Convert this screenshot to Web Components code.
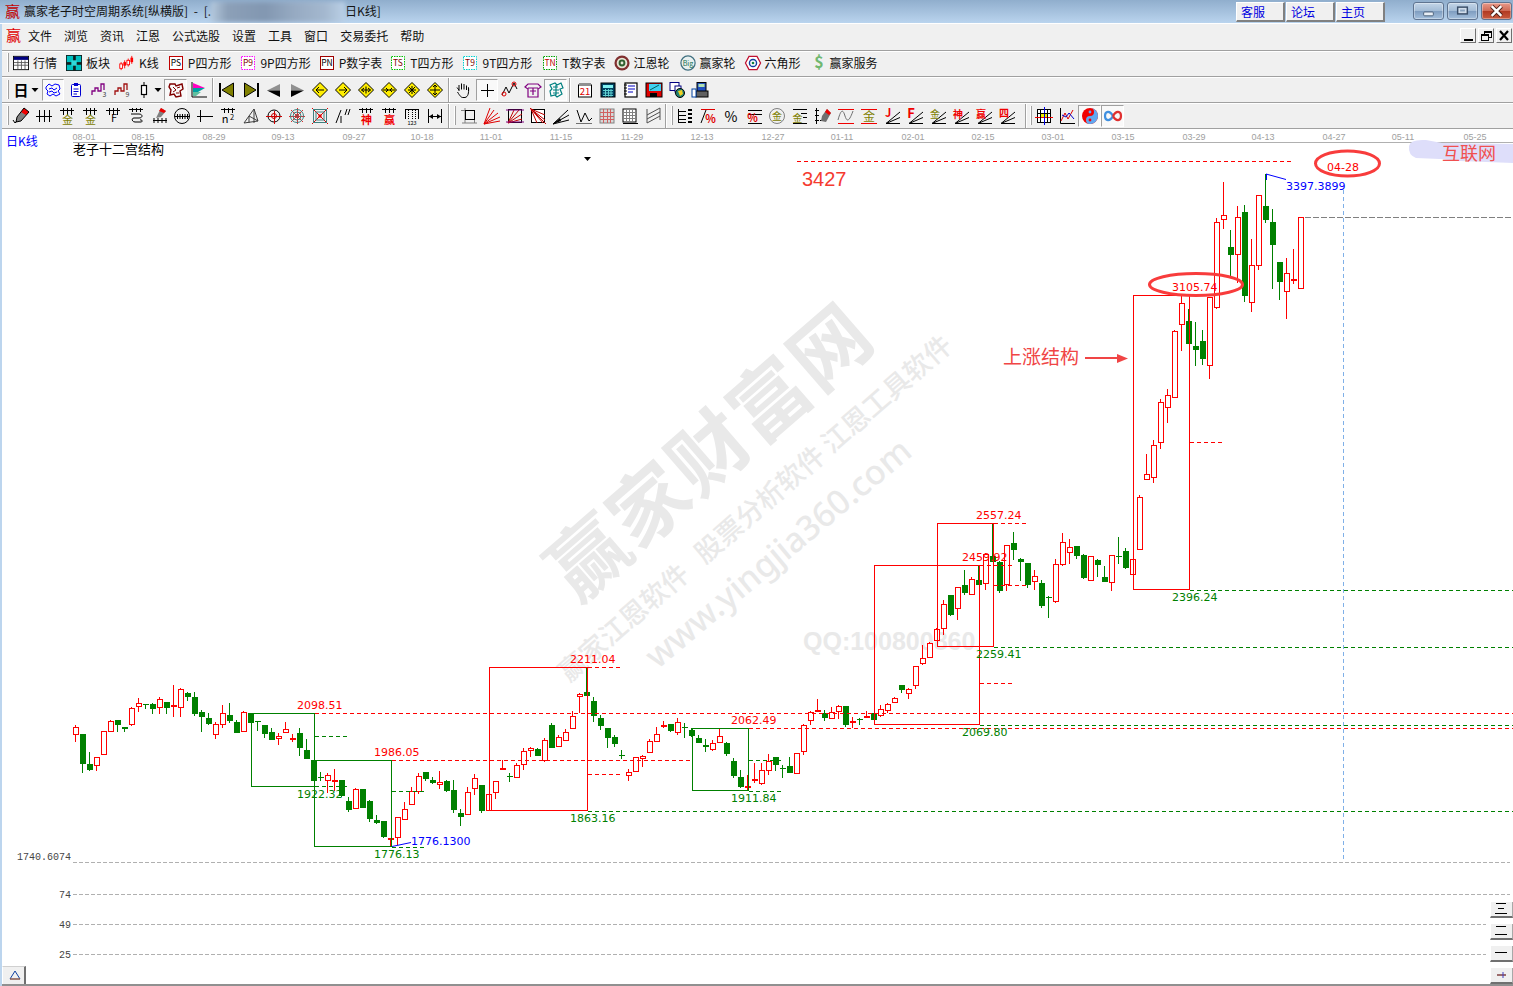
<!DOCTYPE html>
<html>
<head>
<meta charset="utf-8">
<title>赢家老子时空周期系统</title>
<style>
  html, body { margin: 0; padding: 0; background: #fff; overflow: hidden; }
</style>
</head>
<body>

<app-window>
  <title-bar slot="title"></title-bar>

  <menu-bar slot="rows"></menu-bar>

  <tool-bar slot="rows" style="height:23px;padding-bottom:2px">
    <tool-grip></tool-grip>
    <tool-item icon="grid" style="margin-left:4px">行情</tool-item>
    <tool-item icon="blocks" style="margin-left:9px">板块</tool-item>
    <tool-item icon="kline" size="18" style="margin-left:7px">K线</tool-item>
    <tool-item icon="ps" size="14" gap="5" style="margin-left:10px">P四方形</tool-item>
    <tool-item icon="p9" size="14" gap="5" style="margin-left:10px">9P四方形</tool-item>
    <tool-item icon="pn" size="14" gap="5" style="margin-left:9px">P数字表</tool-item>
    <tool-item icon="ts" size="14" gap="5" style="margin-left:9px">T四方形</tool-item>
    <tool-item icon="t9" size="14" gap="5" style="margin-left:10px">9T四方形</tool-item>
    <tool-item icon="tn" size="14" gap="5" style="margin-left:11px">T数字表</tool-item>
    <tool-item icon="wheel" style="margin-left:8px">江恩轮</tool-item>
    <tool-item icon="big" style="margin-left:10px">赢家轮</tool-item>
    <tool-item icon="hex" style="margin-left:9px">六角形</tool-item>
    <tool-item icon="dollar" size="12" gap="5" style="margin-left:12px">赢家服务</tool-item>
  </tool-bar>

  <tool-bar slot="rows">
    <tool-grip style="margin-right:1px"></tool-grip>
    <tool-btn icon="day" w="21"></tool-btn>
    <tool-btn icon="drop" w="7" style="margin-right:4px"></tool-btn>
    <tool-btn icon="map" w="22" sel></tool-btn>
    <tool-btn icon="clip"></tool-btn>
    <tool-btn icon="step3"></tool-btn>
    <tool-btn icon="step9"></tool-btn>
    <tool-btn icon="candle" w="21"></tool-btn>
    <tool-btn icon="drop" w="7" style="margin-right:3px"></tool-btn>
    <tool-btn icon="mapr" sel></tool-btn>
    <tool-btn icon="flag"></tool-btn>
    <tool-sep lead="2" tail="2"></tool-sep>
    <tool-btn icon="first"></tool-btn>
    <tool-btn icon="last"></tool-btn>
    <tool-btn icon="prev"></tool-btn>
    <tool-btn icon="next"></tool-btn>
    <tool-btn icon="d1"></tool-btn>
    <tool-btn icon="d2"></tool-btn>
    <tool-btn icon="d3"></tool-btn>
    <tool-btn icon="d4"></tool-btn>
    <tool-btn icon="d5"></tool-btn>
    <tool-btn icon="d6"></tool-btn>
    <tool-sep lead="2" tail="1"></tool-sep>
    <tool-btn icon="hand"></tool-btn>
    <tool-btn icon="cross" w="22" sel style="margin-left:2px"></tool-btn>
    <tool-btn icon="zig"></tool-btn>
    <tool-btn icon="shirt"></tool-btn>
    <tool-btn icon="mapt" sel></tool-btn>
    <tool-sep lead="2" tail="2"></tool-sep>
    <tool-btn icon="cal"></tool-btn>
    <tool-btn icon="calc"></tool-btn>
    <tool-btn icon="note"></tool-btn>
    <tool-btn icon="floppy"></tool-btn>
    <tool-btn icon="web"></tool-btn>
    <tool-btn icon="print"></tool-btn>
  </tool-bar>

  <tool-bar slot="rows">
    <tool-grip></tool-grip>
    <tool-btn icon="pen"></tool-btn>
    <tool-btn icon="tick3"></tool-btn>
    <tool-btn icon="gold"></tool-btn>
    <tool-btn icon="gold"></tool-btn>
    <tool-btn icon="combf"></tool-btn>
    <tool-btn icon="spiral"></tool-btn>
    <tool-btn icon="penruler"></tool-btn>
    <tool-btn icon="circruler"></tool-btn>
    <tool-btn icon="tick4"></tool-btn>
    <tool-btn icon="combn"></tool-btn>
    <tool-btn icon="tri"></tool-btn>
    <tool-btn icon="target"></tool-btn>
    <tool-btn icon="webr"></tool-btn>
    <tool-btn icon="square"></tool-btn>
    <tool-btn icon="slant"></tool-btn>
    <tool-btn icon="combs"></tool-btn>
    <tool-btn icon="comby"></tool-btn>
    <tool-btn icon="ruler"></tool-btn>
    <tool-btn icon="span"></tool-btn>
    <tool-sep lead="2" gap="4" tail="1" grip></tool-sep>
    <tool-btn icon="legs"></tool-btn>
    <tool-btn icon="fanr"></tool-btn>
    <tool-btn icon="boxfan"></tool-btn>
    <tool-btn icon="boxdiag"></tool-btn>
    <tool-btn icon="fanb"></tool-btn>
    <tool-btn icon="vee"></tool-btn>
    <tool-btn icon="gridr"></tool-btn>
    <tool-btn icon="gridk"></tool-btn>
    <tool-btn icon="par"></tool-btn>
    <tool-sep lead="1" gap="4" tail="0" grip></tool-sep>
    <tool-btn icon="bars"></tool-btn>
    <tool-btn icon="pctr"></tool-btn>
    <tool-btn icon="pct"></tool-btn>
    <tool-btn icon="pctl"></tool-btn>
    <tool-btn icon="goldc"></tool-btn>
    <tool-btn icon="goldl"></tool-btn>
    <tool-btn icon="rulerp"></tool-btn>
    <tool-btn icon="wave"></tool-btn>
    <tool-btn icon="goldr"></tool-btn>
    <tool-btn icon="fj"></tool-btn>
    <tool-btn icon="ff"></tool-btn>
    <tool-btn icon="fg"></tool-btn>
    <tool-btn icon="fs"></tool-btn>
    <tool-btn icon="fy"></tool-btn>
    <tool-btn icon="f4"></tool-btn>
    <tool-sep lead="7" gap="3" tail="0" grip></tool-sep>
    <tool-btn icon="gridc"></tool-btn>
    <tool-btn icon="axes"></tool-btn>
    <tool-btn icon="yin" w="23" sel></tool-btn>
    <tool-btn icon="inf" w="23" sel></tool-btn>
  </tool-bar>

  <k-chart slot="rows"></k-chart>
</app-window>

<script>
const LIGHT = '#a0a0a0';

// small helpers for the icon strings
const L = (d, c = '#000', w = 1) => `<path d="${d}" fill="none" stroke="${c}" stroke-width="${w}"/>`;
const F = (d, c) => `<path d="${d}" fill="${c}"/>`;
const T = (t, x, y, c, s = 9, b = 400) => `<text x="${x}" y="${y}" font-size="${s}" font-weight="${b}" fill="${c}" text-anchor="middle" font-family="'Noto Sans CJK SC','DejaVu Sans',sans-serif">${t}</text>`;

// the lettered tags are drawn in a 14 box
const tagged = (t, border, ink, dash) =>
  `<rect x="0.5" y="0.5" width="13" height="13" fill="#fff" stroke="${border}"${dash ? ' stroke-dasharray="1.5 1"' : ''}/>` + T(t, 7, 10.3, ink, 8.5);

const comb = g => L('M2 3.5H16M5.5 1V8M9.5 1V8M13.5 1V8') + g;
const fan = g => L('M3 16.5L17 5M3 16.5L17 10.5M3 16.5H17') + g;
const diamond = a => `<path d="M9 1.5L16.5 9L9 16.5L1.5 9Z" fill="#ffee00" stroke="#000"/>` + L(a);
const tick = n => { let s = 'M1 9.5H17'; for (let i = 0; i < n; i++) s += `M${4 + i * (n == 3 ? 5 : 3.5)}.5 3V15`; return L(s); };

const ICONS = {
  grid: `<rect x="0.5" y="1.5" width="17" height="15" fill="#fff" stroke="#000"/><rect x="1" y="2" width="16" height="3.5" fill="#000080"/>` + L('M1 8.5H17M1 11.5H17M5.5 6V16M9.5 6V16M13.5 6V16', '#555'),
  blocks: `<rect x="0" y="0" width="18" height="18" fill="#102020"/><rect x="1" y="1" width="7" height="7" fill="#00c0c0"/><rect x="11" y="1" width="6" height="7" fill="#00c0c0"/><rect x="1" y="11" width="7" height="6" fill="#00c0c0"/><rect x="11" y="11" width="6" height="6" fill="#00c0c0"/><rect x="6" y="6" width="6" height="6" fill="#30d8d8"/>`,
  kline: L('M3.5 8V17M7.5 6V15M11.5 4V13M15.5 1V10', '#f00') + `<rect x="2" y="10" width="3" height="5" fill="#fff" stroke="#f00"/><rect x="6" y="8" width="3" height="4" fill="#f00"/><rect x="10" y="6" width="3" height="5" fill="#fff" stroke="#f00"/><rect x="14" y="3" width="3" height="5" fill="#f00"/>`,
  ps: tagged('PS', '#c00000', '#000'),
  p9: tagged('P9', '#ff00ff', '#800000', true),
  pn: tagged('PN', '#a00000', '#000'),
  ts: tagged('TS', '#00c000', '#800000', true),
  t9: tagged('T9', '#00d0d0', '#800000', true),
  tn: tagged('TN', '#00a000', '#c00000', true),
  wheel: `<circle cx="9" cy="9" r="8.5" fill="#803030"/><circle cx="9" cy="9" r="6" fill="#e8e8d8"/><circle cx="9" cy="9" r="3.8" fill="#306030"/><circle cx="9" cy="9" r="1.6" fill="#e8e8d8"/>`,
  big: `<circle cx="9" cy="9" r="8" fill="#e8f0f0" stroke="#407080" stroke-width="1.4"/>` + T('Big', 9, 12, '#207050', 8),
  hex: `<path d="M4.5 1.5H13.5L17.5 9L13.5 16.5H4.5L0.5 9Z" fill="#fff" stroke="#c01030" stroke-width="1.4"/><circle cx="9" cy="9" r="4" fill="#fff" stroke="#1040a0" stroke-width="1.6"/><circle cx="9" cy="9" r="1.5" fill="#108040"/>`,
  dollar: T('$', 9, 17, '#70b870', 24, 700),

  day: T('日', 9, 15, '#000', 15, 700),
  drop: F('M5.5 7H12.5L9 11Z', '#000'),
  map: L('M2 6L5 3L8 5L11 3L15 4L16 8L14 10L16 13L12 15L9 13L6 15L3 13L4 10L2 8Z', '#0000ff') + L('M5 8L8 7L10 9L13 7M5 11L8 10L10 12L13 11', '#0000ff'),
  clip: `<rect x="4.5" y="3.5" width="9" height="12" rx="1" fill="#fff" stroke="#0000d0"/><rect x="7" y="2" width="4" height="3" fill="#0000d0"/>` + L('M6.5 8H11.5M6.5 10.5H11.5M6.5 13H10', '#0000d0'),
  step3: L('M2 14V10H5V7H8V10H11V3H14V9', '#800080', 1.3) + T('3', 14.5, 16, '#404040', 7),
  step9: L('M2 14V10H5V7H8V10H11V3H14V9', '#a01010', 1.3) + T('9', 14.5, 16, '#404040', 7),
  candle: `<rect x="6.5" y="4.5" width="5" height="9" fill="#fff" stroke="#000" stroke-width="1.2"/>` + L('M9 1V4.5M9 13.5V17'),
  mapr: L('M3 3H8L9 5L15 3L16 8L13 10L14 15L9 16L7 13L3 14L4 9L2 6Z', '#800000', 1.4) + L('M6 6L9 9L6 11M10 7L13 6M9 12L12 12', '#800000'),
  flag: L('M2 1V16H17', '#000') + F('M3 2L15 7H3Z', '#ff00c0') + F('M3 7H15L8 11H3Z', '#00a0a0') + F('M3 11H11L6 15H3Z', '#60c0a0'),
  first: F('M0 2H2V16H0Z', '#000') + `<path d="M14.5 2V16L3 9Z" fill="#808000" stroke="#000"/>`,
  last: F('M15 2H17V16H15Z', '#000') + `<path d="M2.5 2V16L14 9Z" fill="#808000" stroke="#000"/>`,
  prev: F('M15 3V9.5H2Z', '#909090') + F('M15 9.5V16L2 9.5Z', '#000'),
  next: F('M3 3V9.5H16Z', '#909090') + F('M3 9.5V16L16 9.5Z', '#000'),
  d1: diamond('M13 9H5M8 6L5 9L8 12'),
  d2: diamond('M5 9H13M10 6L13 9L10 12'),
  d3: diamond('M4.5 9H13.5M7 7L4.5 9L7 11M11 7L13.5 9L11 11M9 5.5V12.5'),
  d4: diamond('M3 9H15M6 7L8 9L6 11M12 7L10 9L12 11'),
  d5: diamond('M5 9H13M9 5V13M6 6L12 12M12 6L6 12'),
  d6: diamond('M4 9H14M9 4V14M7 6L9 4L11 6M7 12L9 14L11 12'),
  hand: L('M5 9L3 6.5M5 10V4M7.5 8.5V2.5M10 8.5V3M12.5 9V4.5M14.5 10V6.5C15 12 14 16 11 16.5H9C7 16.5 6 15 3.5 11'),
  cross: L('M9.5 3V16M3 9.5H16'),
  zig: L('M1 14L5 6L8 12L13 2L16 8') + `<circle cx="3" cy="13" r="2" fill="none" stroke="#e00000"/><circle cx="13" cy="3" r="2" fill="none" stroke="#e00000"/>`,
  shirt: L('M4 3H14L17 6L14 8V16H4V8L1 6ZM4 7H14M9 7V14M6 10H12', '#800080', 1.2),
  mapt: L('M3 4L8 2L10 4L14 2L16 7L13 8L15 13L10 16L8 14L4 15L3 10L5 8ZM6 6L11 6M6 9H12M6 12H12M9 4V14', '#008080', 1.2),
  cal: `<rect x="2.5" y="4" width="13" height="12" fill="#fff" stroke="#000"/><rect x="3" y="2" width="12" height="3" fill="#909090"/>` + T('21', 9, 14, '#e00000', 9.5),
  calc: `<rect x="2" y="2" width="14" height="14" fill="#004060" stroke="#000"/><rect x="4" y="4" width="10" height="3" fill="#80f0f0"/>` + L('M4 9.5H14M4 12H14M4 14.5H14M6.5 8V15.5M9.5 8V15.5M12 8V15.5', '#60d0d0'),
  note: `<rect x="3" y="2" width="12" height="14" fill="#fff" stroke="#000" stroke-width="1.2"/>` + L('M2 4H5M2 7H5M2 10H5M2 13H5', '#000') + L('M6 5H13M6 8H13M6 11H11', '#0000c0'),
  floppy: `<rect x="1" y="2" width="16" height="14" fill="#e00000" stroke="#000"/><rect x="4" y="3" width="12" height="7" fill="#40d0f0"/><rect x="5" y="12" width="7" height="4" fill="#000"/>` + L('M5 9L14 4', '#006060'),
  web: `<rect x="2" y="1.5" width="9" height="8" fill="#fff" stroke="#000080"/><rect x="7" y="5" width="6" height="6" fill="#fff" stroke="#000080"/><circle cx="12" cy="12" r="4.5" fill="#208070" stroke="#000"/>` + F('M10 10L14 9L15 13L12 15Z', '#f0d020'),
  print: `<rect x="6" y="1.5" width="9" height="9" fill="#2050c0" stroke="#000"/><rect x="7.5" y="3" width="6" height="3" fill="#b0e0b0"/><rect x="5" y="10" width="12" height="6" fill="#606060" stroke="#000"/><rect x="1" y="8" width="4" height="8" fill="#fff" stroke="#0040a0"/>`,

  pen: F('M12 1L17 5L9 14L4 15L5 10Z', '#808080') + F('M12 1L17 5L14 8L9 5Z', '#f00000') + L('M12 1L17 5L9 14L4 15L5 10ZM1 13L3 16L5 14'),
  tick3: tick(3),
  gold: comb(T('金', 9.5, 17, '#808000', 11)),
  combf: comb(T('F', 10, 15, '#000', 11)),
  spiral: L('M2 2.5H16M5.5 1V5M9.5 1V5M13.5 1V5M4 7H12C16 7 16 11 12 11H7C4 11 5 15 8 15H14C16 15 15 12 13 13'),
  penruler: F('M11 1L16 4L11 10L6 11Z', '#808080') + F('M11 1L16 4L14 6L9 4Z', '#f00000') + L('M3 13.5H17M4 11V16M8 11V16M12 11V16M16 11V16'),
  circruler: `<circle cx="9" cy="9" r="7.5" fill="none" stroke="#000"/>` + L('M2 9.5H17M4.5 7V12M7 7V12M9.5 7V12M12 7V12M14.5 7V12'),
  tick4: tick(4),
  combn: L('M2 2.5H16M5.5 1V6M9.5 1V6M13.5 1V6') + T('n', 6, 16, '#000', 11) + T('2', 13, 13, '#000', 7.5),
  tri: L('M2 16L12 2L16 14ZM7 9L16 14M7 9V16M12 2V16', '#404040'),
  target: `<circle cx="9" cy="9" r="6" fill="none" stroke="#000"/><circle cx="9" cy="9" r="2.5" fill="none" stroke="#c00000"/>` + L('M1 9.5H17M9.5 4V17', '#d00000'),
  webr: L('M9.5 1V17M1 9.5H17M3 3L15 15M15 3L3 15', '#e03030') + `<circle cx="9" cy="9" r="6.5" fill="none" stroke="#408080"/><circle cx="9" cy="9" r="4" fill="none" stroke="#408080"/><circle cx="9" cy="9" r="2" fill="#a04040"/>`,
  square: L('M1 1L17 17M17 1L1 17', '#e00000') + `<rect x="2.5" y="2.5" width="13" height="13" fill="none" stroke="#408080"/><rect x="5" y="5" width="8" height="8" fill="none" stroke="#408080"/><rect x="7.5" y="7.5" width="3" height="3" fill="#e00000"/>`,
  slant: L('M2 16L7 3M7 16V9M11 8L13 2M14 8L16 2'),
  combs: L('M2 2.5H16M5.5 1V6M9.5 1V6M13.5 1V6') + T('神', 9.5, 17, '#f00000', 11, 700),
  comby: L('M2 2.5H16M5.5 1V6M9.5 1V6M13.5 1V6') + T('赢', 9.5, 17, '#f00000', 11, 700),
  ruler: L('M2 2.5H16M2.5 2V12M15.5 2V12') + L('M5.5 3V12M9.5 3V12M12.5 3V12', '#000', 1).replace('/>', ' stroke-dasharray="1 1"/>') + T('123', 9, 17.5, '#000', 5.5),
  span: L('M2.5 2V16M15.5 2V16M3 9.5H15') + F('M3 9.5L7 7V12Z', '#000') + F('M15 9.5L11 7V12Z', '#000'),
  legs: L('M1 3.5H13M5 1V16M2 16H17M14.5 3V16', '#808080') + `<rect x="5.5" y="3.5" width="9" height="9" fill="none" stroke="#000"/>`,
  fanr: L('M1 17L7 1M1 17L11 3M1 17L15 6M1 17L17 10M1 17L17 14', '#e00000'),
  boxfan: `<rect x="2.5" y="2.5" width="13" height="13" fill="none" stroke="#000"/>` + L('M2 16L8 3M2 16L13 3M2 16L16 7M2 16L16 12', '#c00000') + L('M0 3H18M0 15H18', '#800080'),
  boxdiag: `<rect x="2.5" y="2.5" width="13" height="13" fill="#fff" stroke="#000"/>` + L('M1 1L17 17M2 2L8 16M2 2L14 16M2 2L16 8M2 2L16 13', '#c00000'),
  fanb: L('M1 17L16 3M1 17L17 8M1 17L17 13') + F('M1 17L8 11L9 14Z', '#000'),
  vee: L('M2 3L6 15L10 6L14 14L17 11') + L('M1 16.5H17', '#707070'),
  gridr: `<rect x="2" y="2" width="14" height="14" fill="#d8d8d8" stroke="#808080"/>` + L('M5.5 2V16M9.5 2V16M12.5 2V16M2 5.5H16M2 9.5H16M2 12.5H16', '#d06060'),
  gridk: `<rect x="2" y="2" width="13" height="13" fill="#fff" stroke="#000"/>` + L('M5.5 2V15M8.5 2V15M11.5 2V15M2 5.5H15M2 8.5H15M2 11.5H15', '#808080') + L('M2 16.5H17', '#000'),
  par: L('M3 2V16M3 8L16 1M3 12L16 5M3 16L16 9M16 1V13', '#505050'),
  bars: L('M2.5 2V16M2 4.5H10M2 8.5H10M2 12.5H10M2 15.5H10') + L('M12 3H16M12 7H16M12 11H16M12 15H16', '#000', 2),
  pctr: L('M2 2.5H16', '#e00000') + L('M2 16L7 3') + T('%', 11.5, 16, '#e00000', 11, 700),
  pct: T('%', 9, 14.5, '#000', 14),
  pctl: L('M3 3.5H17M3 7.5H17M3 16.5H17', '#000') + T('%', 7.5, 15, '#e00000', 11, 700),
  goldc: `<circle cx="9" cy="9" r="7.5" fill="#f0f0f0" stroke="#808080"/>` + T('金', 9, 13, '#808000', 10),
  goldl: L('M2 2.5H16M10 6.5H16M12 10.5H16M2 16.5H16') + T('金', 6.5, 15, '#808000', 10),
  rulerp: L('M2.5 1V17M1 3.5H5M1 8.5H5M1 13.5H5M6 13.5H10') + F('M13 2L17 6L12 15L7 14L8 9Z', '#707070') + F('M13 2L17 6L15 8L11 5Z', '#f00000'),
  wave: L('M1 2.5H17M1 16.5H17', '#f00000') + L('M1 13C4 2 6 2 8 9C10 15 12 15 16 4', '#707070'),
  goldr: L('M1 2.5H17M1 16.5H17', '#f00000') + T('金', 9, 14, '#808000', 12),
  fj: fan(T('J', 5, 10, '#f00000', 11, 700)),
  ff: fan(T('F', 5, 11, '#f00000', 13, 700)),
  fg: fan(T('金', 6, 11, '#808000', 10)),
  fs: fan(T('神', 6, 11, '#f00000', 10, 700)),
  fy: fan(T('赢', 6, 11, '#f00000', 10, 700)),
  f4: fan(T('四', 6, 10, '#f00000', 10, 700)),
  gridc: `<rect x="2.5" y="2.5" width="13" height="13" fill="#fff" stroke="#000"/><rect x="6" y="6" width="6" height="5" fill="#f0f000"/>` + L('M0 10.5H18', '#f00000') + L('M9.5 0V18', '#0000e0') + L('M2 6.5H16M5.5 2V16M12.5 2V16'),
  axes: L('M2.5 1V16.5H17') + L('M3 14L7 6L10 12L15 3', '#e00000') + L('M4 8L8 10L11 6L16 12', '#0000d0'),
  yin: `<circle cx="9" cy="9" r="8" fill="#f00000"/><path d="M9 1A8 8 0 0 1 9 17A4 4 0 0 1 9 9A4 4 0 0 0 9 1Z" fill="#60a8f0"/><circle cx="9" cy="5" r="1.4" fill="#60a8f0"/><circle cx="9" cy="13" r="1.4" fill="#f00000"/>`,
  inf: L('M9 9C6 3 1 4 1 9C1 14 6 15 9 9', '#4090e0', 2.2) + L('M9 9C12 3 17 4 17 9C17 14 12 15 9 9', '#e03030', 2.2),
};

// simple element that only needs a style and a slot
const simple = (name, css, html = '<slot></slot>') => customElements.define(name, class extends HTMLElement {
  constructor() {
    super();
    this.attachShadow({mode: 'open'}).innerHTML = `<style>${css}</style>${html}`;
  }
});

simple('app-window', `
  :host { display: flex; flex-direction: column; width: 1513px; height: 986px; overflow: hidden;
    font-family: "Noto Sans CJK SC", sans-serif; font-size: 12px; color: #000; }
  .rows { display: flex; flex-direction: column; flex: 1; border-left: 2px solid #bcd5ee; min-height: 0; }
`, `<slot name="title"></slot><div class="rows"><slot name="rows"></slot></div>`);

simple('tool-bar', `
  :host { display: flex; align-items: center; height: 25px; padding-left: 5px; background: #f0f0f0;
    border-top: 1px solid ${LIGHT}; box-shadow: inset 0 1px #fff; white-space: nowrap; }
`);

simple('tool-grip', `
  :host { display: block; width: 1px; height: 19px; border-left: 1px solid #fff; background: ${LIGHT}; flex: none; }
`, '');

simple('link-btn', `
  :host { display: block; box-sizing: border-box; width: 49px; height: 20px; padding-left: 4px; line-height: 17px;
    background: #f0f0f0; color: #0000e0; border: 1px solid; border-color: #fff #808080 #808080 #fff;
    border-width: 1px 2px 2px 1px; font-size: 12px; }
`);

customElements.define('tool-sep', class extends HTMLElement {
  constructor() {
    super();
    this.attachShadow({mode: 'open'});
  }
  connectedCallback() {
    const lead = this.getAttribute('lead') || 2;
    const tail = this.getAttribute('tail') || 0;
    const gap = this.getAttribute('gap') || 0;
    this.shadowRoot.innerHTML = `<style>
      :host { display: flex; align-items: center; flex: none; height: 24px; gap: ${gap}px; padding: 0 ${tail}px 0 ${lead}px; }
      .line { width: 1px; height: 24px; background: ${LIGHT}; border-right: 1px solid #fff; }
    </style><div class="line"></div>${this.hasAttribute('grip') ? '<tool-grip></tool-grip>' : ''}`;
  }
});

customElements.define('tool-item', class extends HTMLElement {
  constructor() {
    super();
    this.attachShadow({mode: 'open'});
  }
  connectedCallback() {
    const size = +this.getAttribute('size') || 16;
    const gap = this.getAttribute('gap') || 4;
    const box = size == 14 ? '0 0 14 14' : '0 0 18 18';
    this.shadowRoot.innerHTML = `<style>
      :host { display: flex; align-items: center; gap: ${gap}px; flex: none; font-size: 12px; color: #111; }
      svg { width: ${size}px; height: ${size == 14 ? 14 : 16}px; flex: none; overflow: visible; }
    </style><svg viewBox="${box}">${ICONS[this.getAttribute('icon')]}</svg><slot></slot>`;
  }
});

customElements.define('tool-btn', class extends HTMLElement {
  constructor() {
    super();
    this.attachShadow({mode: 'open'});
  }
  connectedCallback() {
    const w = this.getAttribute('w') || 23;
    const sel = this.hasAttribute('sel');
    this.shadowRoot.innerHTML = `<style>
      :host { display: flex; align-items: center; justify-content: center; box-sizing: border-box; flex: none;
        width: ${w}px; height: 22px; ${sel ? 'background: #f9f9f9; border: 1px solid; border-color: #a0a0a0 #fff #fff #a0a0a0;' : ''} }
      svg { width: 18px; height: 18px; flex: none; overflow: visible; }
    </style><svg viewBox="0 0 18 18">${ICONS[this.getAttribute('icon')]}</svg>`;
  }
});

customElements.define('win-btn', class extends HTMLElement {
  constructor() {
    super();
    this.attachShadow({mode: 'open'});
  }
  connectedCallback() {
    const kind = this.getAttribute('kind');
    const bg = kind == 'close'
      ? 'linear-gradient(#e89a8a, #cf6a55 48%, #b23a22 52%, #c85a3e)'
      : 'linear-gradient(#c3d5e8, #a3bcd6 48%, #7f9dc0 52%, #a4c0dd)';
    const mark = {
      min: '<rect x="10" y="9" width="10" height="4" rx="1" fill="#e8eef5" stroke="#4a5e78"/>',
      max: '<rect x="10" y="4" width="10" height="7" fill="#d0dcea" stroke="#3a4e68" stroke-width="1.5"/><rect x="12.5" y="6.5" width="5" height="2" fill="#8aa4c0"/>',
      close: '<path d="M10 3L20 13M20 3L10 13" stroke="#4a2018" stroke-width="4.5"/><path d="M10 3L20 13M20 3L10 13" stroke="#fff" stroke-width="2.5"/>',
    }[kind];
    this.shadowRoot.innerHTML = `<style>
      :host { display: block; box-sizing: border-box; width: 31px; height: 18px; border: 1px solid #5f7490; border-radius: 3px;
        background: ${bg}; box-shadow: inset 0 0 0 1px rgba(255,255,255,.35); }
      svg { display: block; width: 29px; height: 16px; }
    </style><svg viewBox="0 0 30 16">${mark}</svg>`;
  }
});

customElements.define('title-bar', class extends HTMLElement {
  constructor() {
    super();
    this.attachShadow({mode: 'open'}).innerHTML = `<style>
      :host { display: flex; align-items: center; height: 23px; padding-left: 5px; flex: none; white-space: nowrap;
        background: linear-gradient(#90aecd, #bad4ee); border-bottom: 1px solid #fff; color: #141414; font-size: 12px; overflow: hidden; }
      span { margin-bottom: 2px; word-spacing: 3px; }
      .logo { width: 15px; margin-right: 4px; font-size: 15px; color: #c00000; line-height: 18px; }
      .blur { width: 134px; height: 20px; filter: blur(2px); flex: none;
        background: linear-gradient(90deg, #b5c9dd, #8ca0b8 12%, #8297b1 40%, #96aac2 62%, #a4b8cf 85%, #bad0e6); }
      .links { display: flex; gap: 1px; margin-left: auto; }
      .wins { display: flex; gap: 3px; margin: 0 1px 2px 28px; }
    </style>
    <span class="logo">赢</span>
    <span>赢家老子时空周期系统[纵横版] - [.</span>
    <div class="blur"></div>
    <span>日K线]</span>
    <div class="links"><link-btn>客服</link-btn><link-btn>论坛</link-btn><link-btn>主页</link-btn></div>
    <div class="wins"><win-btn kind="min"></win-btn><win-btn kind="max"></win-btn><win-btn kind="close"></win-btn></div>`;
  }
});

customElements.define('menu-bar', class extends HTMLElement {
  constructor() {
    super();
    const items = ['文件','浏览','资讯','江恩','公式选股','设置','工具','窗口','交易委托','帮助'];
    const glyph = {
      min: '<path d="M3 11H12" stroke="#000" stroke-width="2"/>',
      max: '<rect x="5.5" y="2.5" width="7" height="6" fill="none" stroke="#000"/><path d="M5 3.5H12" stroke="#000"/><rect x="2.5" y="5.5" width="7" height="6" fill="#f0f0f0" stroke="#000"/><path d="M2 6.5H9" stroke="#000"/>',
      close: '<path d="M3 2L11 11M11 2L3 11" stroke="#000" stroke-width="2.2"/>',
    };
    this.attachShadow({mode: 'open'}).innerHTML = `<style>
      :host { display: flex; align-items: center; height: 26px; padding-left: 4px; background: #f0f0f0; flex: none; white-space: nowrap; color: #111; font-size: 12px; }
      .logo { width: 15px; margin: 0 7px 4px 0; font-size: 15px; color: #e00000; line-height: 18px; }
      .items { display: flex; gap: 12px; margin-bottom: 4px; }
      .mdi { display: flex; gap: 2px; margin: 0 1px 4px auto; }
      .mdi div { box-sizing: border-box; width: 16px; height: 15px; border: 1px solid; border-color: #fff #707070 #707070 #fff; background: #f0f0f0; }
      svg { display: block; width: 14px; height: 13px; }
    </style>
    <span class="logo">赢</span>
    <div class="items">${items.map(t => `<span>${t}</span>`).join('')}</div>
    <div class="mdi">${['min','max','close'].map(k => `<div><svg viewBox="0 0 14 13">${glyph[k]}</svg></div>`).join('')}</div>`;
  }
});

customElements.define('side-btn', class extends HTMLElement {
  constructor() {
    super();
    this.attachShadow({mode: 'open'});
  }
  connectedCallback() {
    const n = +this.getAttribute('lines');
    const rows = {3: 'M5 1.5H15M7 6.5H13M4 11.5H16', 2: 'M5 2.5H15M4 10.5H16', 1: 'M4 6.5H16'}[n];
    const mark = n ? `<path d="${rows}" stroke="#000"/>` : this.getAttribute('mark');
    this.shadowRoot.innerHTML = `<style>
      :host { display: block; box-sizing: border-box; width: 23px; height: 16px; background: #f0f0f0;
        border: 1px solid; border-color: #fff #a8a8a8 #707070 #fff; border-width: 0 1px 2px 1px; }
      svg { display: block; width: 21px; height: 14px; }
    </style><svg viewBox="0 0 21 14">${mark}</svg>`;
  }
});

/* candle rows: colour, high, body top, body bottom, low
   each block is read in its own zoomed coordinates: y = y0 + v / 3 */
const CANDLES = [
  [670, [
    ['r',165,172,193,215],['g',192,192,281,308],['g',246,282,300,303],['r',262,262,284,302],['r',184,184,253,253],
    ['r',150,152,182,185],['g',150,150,164,186],['g',171,171,176,186],['r',112,115,163,167],['r',84,100,109,125],
    ['g',102,102,104,117],['g',98,102,116,132],['r',82,88,112,132],['g',97,97,113,132],['r',45,105,109,140],
    ['r',55,58,112,140],['g',65,70,80,93],['g',67,82,131,138],['g',120,126,140,185],['g',128,144,161,165],
    ['r',157,163,193,207],['r',105,130,163,175],['g',98,136,152,158],['g',150,156,188,188],['r',124,127,182,186],
    ['g',130,130,158,160],['g',154,154,156,183],['g',166,166,191,204],['g',175,187,209,209],['r',190,197,205,225],
    ['r',156,178,187,187],['r',193,203,208,215],['g',175,190,233,257],['g',207,240,266,266],['g',270,271,332,332],
    ['g',305,320,322,332],['r',308,314,331,370],['r',297,331,332,362],['g',330,330,377,380],['g',380,394,419,425],
    ['r',354,358,415,415],['g',358,358,413,413],['g',390,394,446,455],['g',435,451,458,462],['g',453,453,500,505],
    ['r',503,503,506,530],['r',503,440,502,525],['r',395,418,448,450],['r',350,362,403,404],['r',310,319,364,372],
    ['g',306,306,326,332],['g',322,331,338,341],['r',304,335,343,357],['g',330,334,362,365],['g',330,361,419,428],
    ['g',418,430,440,467],['r',352,367,433,434],['r',312,325,355,375],
  ]],
  [650, [
    ['g',405,405,483,488],['r',433,433,481,481],['r',394,394,427,446],['r',330,355,356,356],['g',370,377,379,395],
    ['r',338,344,382,382],['r',295,304,343,360],['r',290,293,300,320],['g',295,298,317,317],['r',265,271,331,335],
    ['g',220,225,293,293],['r',255,262,287,292],['r',238,247,269,272],['r',183,199,235,235],['r',130,133,138,190],
    ['g',52,126,137,137],['g',142,153,197,215],['g',195,204,227,239],['g',235,235,263,293],['g',255,261,282,290],
    ['g',300,315,316,327],['r',357,367,375,393],['r',320,322,362,362],['r',314,319,325,350],['r',268,274,307,307],
    ['r',232,253,272,275],['r',212,224,226,235],['g',222,222,243,246],['r',205,217,245,254],['g',220,230,232,263],
    ['g',235,240,258,262],['g',255,265,278,280],['g',268,284,290,306],['r',270,278,296,303],['r',235,259,277,280],
    ['g',275,279,311,317],['g',325,334,377,383],['g',360,381,411,414],['r',375,407,409,424],['r',340,388,390,398],
    ['r',340,361,398,405],['r',313,334,361,375],['g',322,322,344,362],['g',345,354,356,384],['g',320,349,368,370],
    ['r',308,310,368,371],['r',222,224,304,315],['r',182,187,211,225],['r',147,181,183,187],['g',180,189,203,213],
    ['r',170,187,203,207],['r',165,169,184,206],['g',168,168,224,232],['r',200,214,217,235],['g',205,208,209,225],
    ['r',182,197,199,205],['g',190,190,209,209],['r',165,178,196,200],['r',160,163,181,190],
  ]],
  [500, [
    ['r',590,593,607,610],['g',556,556,569,578],['r',565,566,580,596],['r',498,499,556,566],['r',436,473,490,495],
    ['r',427,428,470,470],['r',383,386,420,420],['r',300,313,385,404],['g',285,285,344,347],['r',262,262,325,360],
    ['g',210,255,278,285],['r',232,238,283,283],['g',197,241,254,254],['r',160,162,250,270],['g',70,169,187,187],
    ['g',182,186,272,278],['r',136,136,253,272],['g',96,129,149,180],['g',175,178,187,243],['g',190,190,254,265],
    ['r',210,229,243,270],['g',240,250,318,323],['g',287,292,294,353],['r',178,193,304,308],['r',100,127,193,197],
    ['r',117,140,157,192],['g',137,138,167,177],['g',162,165,233,236],['r',168,169,241,241],['g',178,180,194,232],
    ['g',198,232,245,245],['r',165,166,247,272],['g',110,169,171,192],['g',145,153,203,207],['r',176,176,223,223],
    ['r',-15,-9,148,148],
  ]],
  [280, [
    ['r',522,583,596,596],['r',480,496,590,608],['r',358,367,485,507],['r',327,346,382,429],['r',150,154,350,350],
    ['r',45,68,131,213],['g',88,124,191,191],['g',127,198,210,258],['g',150,184,237,255],['r',52,52,254,297],
  ]],
  [0, [
    ['r',655,667,920,927],['r',546,645,656,686],['g',690,742,765,830],['r',618,652,761,850],['g',615,636,888,905],
    ['r',717,796,905,935],['r',586,586,795,810],['g',522,618,660,668],['g',627,666,735,867],['g',787,787,846,900],
    ['r',774,820,872,957],['r',747,838,841,852],['r',651,651,865,865],
  ]],
];

const RED = '#ff0000', GREEN = '#008000', BLUE = '#0000ff';

const BOXES = [
  [251,713,314,786,GREEN],[314,760,391,846,GREEN],[489,667,587,810,RED],[692,728,748,790,GREEN],
  [874,565,979,724,RED],[937,523,993,646,RED],[1133,295,1189,589,RED],
];

const DASHES = [
  [315,713,1513,RED],[392,760,692,RED],[749,760,782,GREEN],[315,736,348,GREEN],[392,791,425,GREEN],
  [315,786,348,GREEN],[392,847,425,GREEN],[588,774,621,RED],[588,667,621,RED],[588,811,1513,GREEN],
  [749,728,1513,RED],[749,791,782,GREEN],[980,725,1513,GREEN],[980,683,1013,RED],[994,523,1027,RED],
  [994,585,1027,RED],[980,565,1013,RED],[994,647,1513,GREEN],[1190,590,1513,GREEN],[1190,442,1223,RED],
  [797,161,1292,RED],
];

const LABELS = [
  ['2098.51',297,705,RED],['1986.05',374,752,RED],['1922.32',297,794,GREEN],['1776.13',374,854,GREEN],
  ['1776.1300',411,841,BLUE],['2211.04',570,659,RED],['1863.16',570,818,GREEN],['2062.49',731,720,RED],
  ['1911.84',731,798,GREEN],['2557.24',976,515,RED],['2459.92',962,557,RED],['2259.41',976,654,GREEN],
  ['2069.80',962,732,GREEN],['2396.24',1172,597,GREEN],['3105.74',1172,287,RED],['04-28',1327,167,RED],
  ['3397.3899',1286,186,BLUE],
];

const AXIS = [
  ['08-01',84],['08-15',143],['08-29',214],['09-13',283],['09-27',354],['10-18',422],['11-01',491],
  ['11-15',561],['11-29',632],['12-13',702],['12-27',773],['01-11',842],['02-01',913],['02-15',983],
  ['03-01',1053],['03-15',1123],['03-29',1194],['04-13',1263],['04-27',1334],['05-11',1403],['05-25',1475],
];

customElements.define('k-chart', class extends HTMLElement {
  constructor() {
    super();
    this.attachShadow({mode: 'open'}).innerHTML = `<style>
      :host { display: block; position: relative; height: 856px; flex: none; background: #fff; border-bottom: 2px solid #909090; }
      svg { display: block; width: 1511px; height: 856px; }
      svg text { font-family: "DejaVu Sans", sans-serif; font-size: 11px; }
      svg .cjk { font-family: "Noto Sans CJK SC", sans-serif; }
      svg .crisp { shape-rendering: crispEdges; }
      side-btn { position: absolute; right: 0; }
      .back { position: absolute; left: 0; top: 838px; width: 24px; height: 18px; box-sizing: border-box; background: #f0f0f0;
        border: 1px solid; border-color: #fff #707070 #707070 #fff; border-width: 0 2px 0 1px; border-top: 1px solid #d0d0d0; }
      .back svg { width: 22px; height: 17px; }
    </style>
    <svg viewBox="2 128 1511 856">${this.drawing()}</svg>
    <side-btn lines="3" style="top:774px"></side-btn>
    <side-btn lines="2" style="top:796px"></side-btn>
    <side-btn lines="1" style="top:818px"></side-btn>
    <side-btn mark='<path d="M6 7H15" stroke="#804040" stroke-width="1.5"/><path d="M12 4V10" stroke="#4040c0"/>' style="top:840px"></side-btn>
    <div class="back"><svg viewBox="0 0 22 17"><path d="M12 4L7 12H17Z" fill="none" stroke="#1040a0"/><path d="M7 12H17" stroke="#c06020"/></svg></div>`;
  }

  drawing() {
    let s = '';
    s += `<g class="crisp"><path d="M2 128.5H1513" stroke="${LIGHT}"/><path d="M73 142.5H1513" stroke="#b0b0b0"/></g>`;
    s += AXIS.map(([t, x]) => `<text x="${x}" y="139.5" text-anchor="middle" fill="#a0a0a0" style="font:9px 'Liberation Sans',sans-serif">${t}</text>`).join('');
    s += `<text class="cjk" x="6" y="146" fill="#0000ff" style="font-size:12px">日K线</text>`;
    s += `<text class="cjk" x="73" y="154" fill="#000" style="font-size:13px">老子十二宫结构</text>`;
    s += `<path d="M584 157H591L587.5 161Z" fill="#000"/>`;

    // watermark
    s += `<g fill="#e9e9e9">
      <text class="cjk" transform="translate(710 452) rotate(-41)" y="28" text-anchor="middle" style="font-size:78px;font-weight:700;letter-spacing:2px">赢家财富网</text>
      <text class="cjk" transform="translate(755 508) rotate(-41)" y="10" text-anchor="middle" style="font-size:27px;font-weight:500;white-space:pre">赢家江恩软件   股票分析软件 江恩工具软件</text>
      <text transform="translate(778 553) rotate(-40)" y="12" text-anchor="middle" style="font:500 34px 'Noto Sans',sans-serif">www.yingjia360.com</text>
      <text x="803" y="650" style="font:700 25px 'Liberation Sans',sans-serif">QQ:100800860</text>
    </g>`;

    // blue cross hair and the scale lines below the candles
    s += `<g class="crisp" fill="none">`;
    s += `<path d="M1343.5 190V861" stroke="#7fb0e8" stroke-dasharray="4 3"/>`;
    s += `<path d="M1305 217.5H1513" stroke="#808080" stroke-dasharray="6 2"/>`;
    s += `<path d="M73 862.5H1510M73 894.5H1510M73 924.5H1486M73 954.5H1486" stroke="#b0b0b0" stroke-dasharray="4 2"/>`;
    s += `</g>`;
    s += `<g fill="#444">
      <text x="17" y="859.5" style="font:10px 'Liberation Mono',monospace">1740.6074</text>
      <text x="59" y="898" style="font:10px 'Liberation Mono',monospace">74</text>
      <text x="59" y="928" style="font:10px 'Liberation Mono',monospace">49</text>
      <text x="59" y="958" style="font:10px 'Liberation Mono',monospace">25</text>
    </g>`;

    // candles
    s += `<g class="crisp">`;
    let i = 0;
    for (const [y0, rows] of CANDLES) {
      for (const [c, hi, top, bot, lo] of rows) {
        const x = 75 + 7 * i++;
        const h = Math.round(y0 + hi / 3), t = Math.round(y0 + top / 3), b = Math.round(y0 + bot / 3), l = Math.round(y0 + lo / 3);
        const col = c == 'r' ? RED : GREEN;
        s += `<path d="M${x + .5} ${h}V${l}" stroke="${col}"/>`;
        if (b - t < 2) s += `<rect x="${x - 2}" y="${t}" width="6" height="${c == 'r' ? 2 : 1}" fill="${col}"/>`;
        else if (c == 'r') s += `<rect x="${x - 2 + .5}" y="${t + .5}" width="5" height="${b - t}" fill="#fff" stroke="${RED}"/>`;
        else s += `<rect x="${x - 2}" y="${t}" width="6" height="${b - t}" fill="${GREEN}"/>`;
      }
    }
    s += `</g>`;

    // boxes and dashed levels over the candles
    s += `<g class="crisp" fill="none">`;
    for (const [x1, y1, x2, y2, c] of BOXES) s += `<rect x="${x1 + .5}" y="${y1 + .5}" width="${x2 - x1}" height="${y2 - y1}" stroke="${c}"/>`;
    for (const [x1, y, x2, c] of DASHES) s += `<path d="M${x1} ${y + .5}H${x2}" stroke="${c}" stroke-dasharray="4 3"/>`;
    s += `</g>`;
    s += `<path d="M1266 174L1286 179.5M1266.5 174V180M392 846.5L411 842.5" fill="none" stroke="${BLUE}"/>`;

    for (const [t, x, cy, c] of LABELS) s += `<text x="${x}" y="${cy + 4}" fill="${c}">${t}</text>`;

    // hand notes drawn on the picture
    s += `<text x="802" y="186" fill="#f53b30" style="font:20px 'Liberation Sans',sans-serif">3427</text>`;
    s += `<text class="cjk" x="1003" y="364" fill="#f04545" style="font-size:19px">上涨结构</text>`;
    s += `<path d="M1085 358H1118" stroke="#f04545" stroke-width="2"/><path d="M1117 354L1128 358.5L1117 363Z" fill="#f04545"/>`;
    s += `<ellipse cx="1347.5" cy="163.5" rx="32" ry="12.5" fill="none" stroke="#f83c3c" stroke-width="3"/>`;
    s += `<ellipse cx="1196" cy="284.5" rx="46.5" ry="11" fill="none" stroke="#f83c3c" stroke-width="3"/>`;
    s += `<path d="M1409 146Q1410 139 1426 140L1442 143L1513 144V163L1460 161L1440 159L1416 158Q1408 155 1409 146Z" fill="#dedefa"/>`;
    s += `<text class="cjk" x="1442" y="160" fill="#f05050" style="font-size:18px">互联网</text>`;
    return s;
  }
});
</script>
</body>
</html>
